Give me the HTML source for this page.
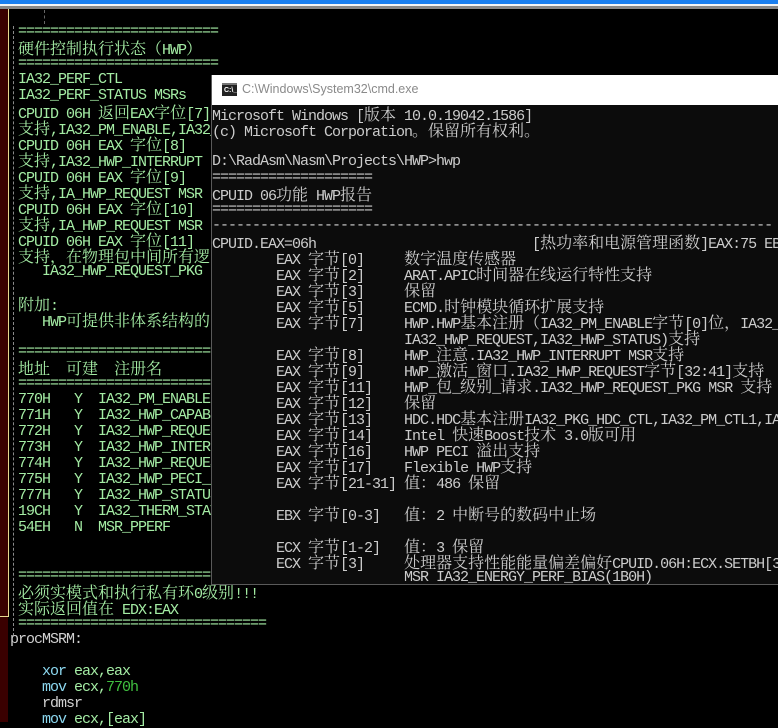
<!DOCTYPE html>
<html><head><meta charset="utf-8"><style>
html,body{margin:0;padding:0;width:778px;height:722px;overflow:hidden;background:#000;}
.top1{position:absolute;left:0;top:0;width:778px;height:4px;background:#1a7ff0;}
.top2{position:absolute;left:0;top:4px;width:778px;height:2px;background:#f4f4f4;}
.top3{position:absolute;left:0;top:6px;width:778px;height:3px;background:#888;}
.red{position:absolute;left:0;top:9px;width:8px;height:713px;background:#3a0000;}
.yl{position:absolute;left:8px;top:9px;width:1px;height:607px;background:#e8d890;}
.yh{position:absolute;left:0;top:616px;width:9px;height:1px;background:#e8d890;}
.dash{position:absolute;left:13px;top:26px;height:610px;border-left:1px dashed #8a8a8a;}
.dash2{position:absolute;left:44px;top:10px;height:14px;border-left:1px dashed #666;}
pre{margin:0;font-family:"Liberation Mono",monospace;font-size:15px;letter-spacing:-1px;line-height:16px;white-space:pre;}
pre div{height:16px;line-height:16px;}
b{font-weight:normal;font-family:"Noto Serif CJK SC","Noto Sans CJK SC",serif;font-size:16px;letter-spacing:0;line-height:16px;}
#ed{position:absolute;left:10px;top:24px;color:#a4eca4;}
.kw{color:#8cd8f0}.nm{color:#40c040}.wh{color:#d0d0d0}
#cmd{position:absolute;left:211px;top:75px;width:567px;height:509px;background:#0c0c0c;border-left:1px solid #5a5a5a;border-bottom:1px solid #5a5a5a;overflow:hidden;}
#tb{position:absolute;left:0;top:0;width:567px;height:30px;background:#fff;}
#tb span{position:absolute;left:30px;top:7px;font-family:"Liberation Sans",sans-serif;font-size:12.5px;color:#8a8a8a;}
.ic{position:absolute;left:10px;top:8px;width:15px;height:11px;background:#222;border-top:2px solid #777;}
.ic i{position:absolute;left:2px;top:2px;font-style:normal;font-family:"Liberation Sans",sans-serif;font-size:7px;color:#fff;font-weight:bold;line-height:7px;}
#ct{position:absolute;left:0;top:31px;color:#cccccc;}
</style></head><body>
<div class="top1"></div><div class="top2"></div><div class="top3"></div>
<div class="red"></div><div class="yl"></div><div class="yh"></div>
<div class="dash"></div><div class="dash2"></div>
<pre id="ed"><div> =========================</div><div> <b>硬件控制执行状态（</b>HWP<b>）</b></div><div> =========================</div><div> IA32_PERF_CTL</div><div> IA32_PERF_STATUS MSRs</div><div> CPUID 06H <b>返回</b>EAX<b>字位</b>[7]</div><div> <b>支持</b>,IA32_PM_ENABLE,IA32_</div><div> CPUID 06H EAX <b>字位</b>[8]</div><div> <b>支持</b>,IA32_HWP_INTERRUPT</div><div> CPUID 06H EAX <b>字位</b>[9]</div><div> <b>支持</b>,IA_HWP_REQUEST MSR</div><div> CPUID 06H EAX <b>字位</b>[10]</div><div> <b>支持</b>,IA_HWP_REQUEST MSR</div><div> CPUID 06H EAX <b>字位</b>[11]</div><div> <b>支持，在物理包中间所有逻</b></div><div>    IA32_HWP_REQUEST_PKG</div><div> </div><div> <b>附加</b>:</div><div>    HWP<b>可提供非体系结构的</b></div><div> </div><div> =========================</div><div> <b>地址</b>  <b>可建</b>  <b>注册名</b></div><div> =========================</div><div> 770H   Y  IA32_PM_ENABLE</div><div> 771H   Y  IA32_HWP_CAPABILITIES</div><div> 772H   Y  IA32_HWP_REQUEST</div><div> 773H   Y  IA32_HWP_INTERRUPT</div><div> 774H   Y  IA32_HWP_REQUEST</div><div> 775H   Y  IA32_HWP_PECI_REQ</div><div> 777H   Y  IA32_HWP_STATUS</div><div> 19CH   Y  IA32_THERM_STATUS</div><div> 54EH   N  MSR_PPERF</div><div> </div><div> </div><div> ===============================</div><div> <b>必须实模式和执行私有环</b>0<b>级别</b>!!!</div><div> <b>实际返回值在</b> EDX:EAX</div><div> ===============================</div><div class="wh">procMSRM:</div><div> </div><div>    <span class="kw">xor</span> eax,eax</div><div>    <span class="kw">mov</span> ecx,<span class="nm">770h</span></div><div>    <span class="wh">rdmsr</span></div><div>    <span class="kw">mov</span> ecx,[eax]</div></pre>
<div id="cmd">
<div id="tb"><div class="ic"><i>C:\_</i></div><span>C:\Windows\System32\cmd.exe</span></div>
<pre id="ct"><div>Microsoft Windows [<b>版本</b> 10.0.19042.1586]</div><div>(c) Microsoft Corporation<b>。保留所有权利。</b></div><div> </div><div>D:\RadAsm\Nasm\Projects\HWP&gt;hwp</div><div>====================</div><div>CPUID 06<b>功能</b> HWP<b>报告</b></div><div>====================</div><div>----------------------------------------------------------------------</div><div>CPUID.EAX=06h                           [<b>热功率和电源管理函数</b>]EAX:75 EBX</div><div>        EAX <b>字节</b>[0]     <b>数字温度传感器</b></div><div>        EAX <b>字节</b>[2]     ARAT.APIC<b>时间器在线运行特性支持</b></div><div>        EAX <b>字节</b>[3]     <b>保留</b></div><div>        EAX <b>字节</b>[5]     ECMD.<b>时钟模块循环扩展支持</b></div><div>        EAX <b>字节</b>[7]     HWP.HWP<b>基本注册（</b>IA32_PM_ENABLE<b>字节</b>[0]<b>位，</b>IA32_H</div><div>                        IA32_HWP_REQUEST,IA32_HWP_STATUS)<b>支持</b></div><div>        EAX <b>字节</b>[8]     HWP_<b>注意</b>.IA32_HWP_INTERRUPT MSR<b>支持</b></div><div>        EAX <b>字节</b>[9]     HWP_<b>激活</b>_<b>窗口</b>.IA32_HWP_REQUEST<b>字节</b>[32:41]<b>支持</b></div><div>        EAX <b>字节</b>[11]    HWP_<b>包</b>_<b>级别</b>_<b>请求</b>.IA32_HWP_REQUEST_PKG MSR <b>支持</b></div><div>        EAX <b>字节</b>[12]    <b>保留</b></div><div>        EAX <b>字节</b>[13]    HDC.HDC<b>基本注册</b>IA32_PKG_HDC_CTL,IA32_PM_CTL1,IA32</div><div>        EAX <b>字节</b>[14]    Intel <b>快速</b>Boost<b>技术</b> 3.0<b>版可用</b></div><div>        EAX <b>字节</b>[16]    HWP PECI <b>溢出支持</b></div><div>        EAX <b>字节</b>[17]    Flexible HWP<b>支持</b></div><div>        EAX <b>字节</b>[21-31] <b>值：</b>486 <b>保留</b></div><div> </div><div>        EBX <b>字节</b>[0-3]   <b>值：</b>2 <b>中断号的数码中止场</b></div><div> </div><div>        ECX <b>字节</b>[1-2]   <b>值：</b>3 <b>保留</b></div><div>        ECX <b>字节</b>[3]     <b>处理器支持性能能量偏差偏好</b>CPUID.06H:ECX.SETBH[3]</div><div>                        MSR IA32_ENERGY_PERF_BIAS(1B0H)</div></pre>
</div>
</body></html>
